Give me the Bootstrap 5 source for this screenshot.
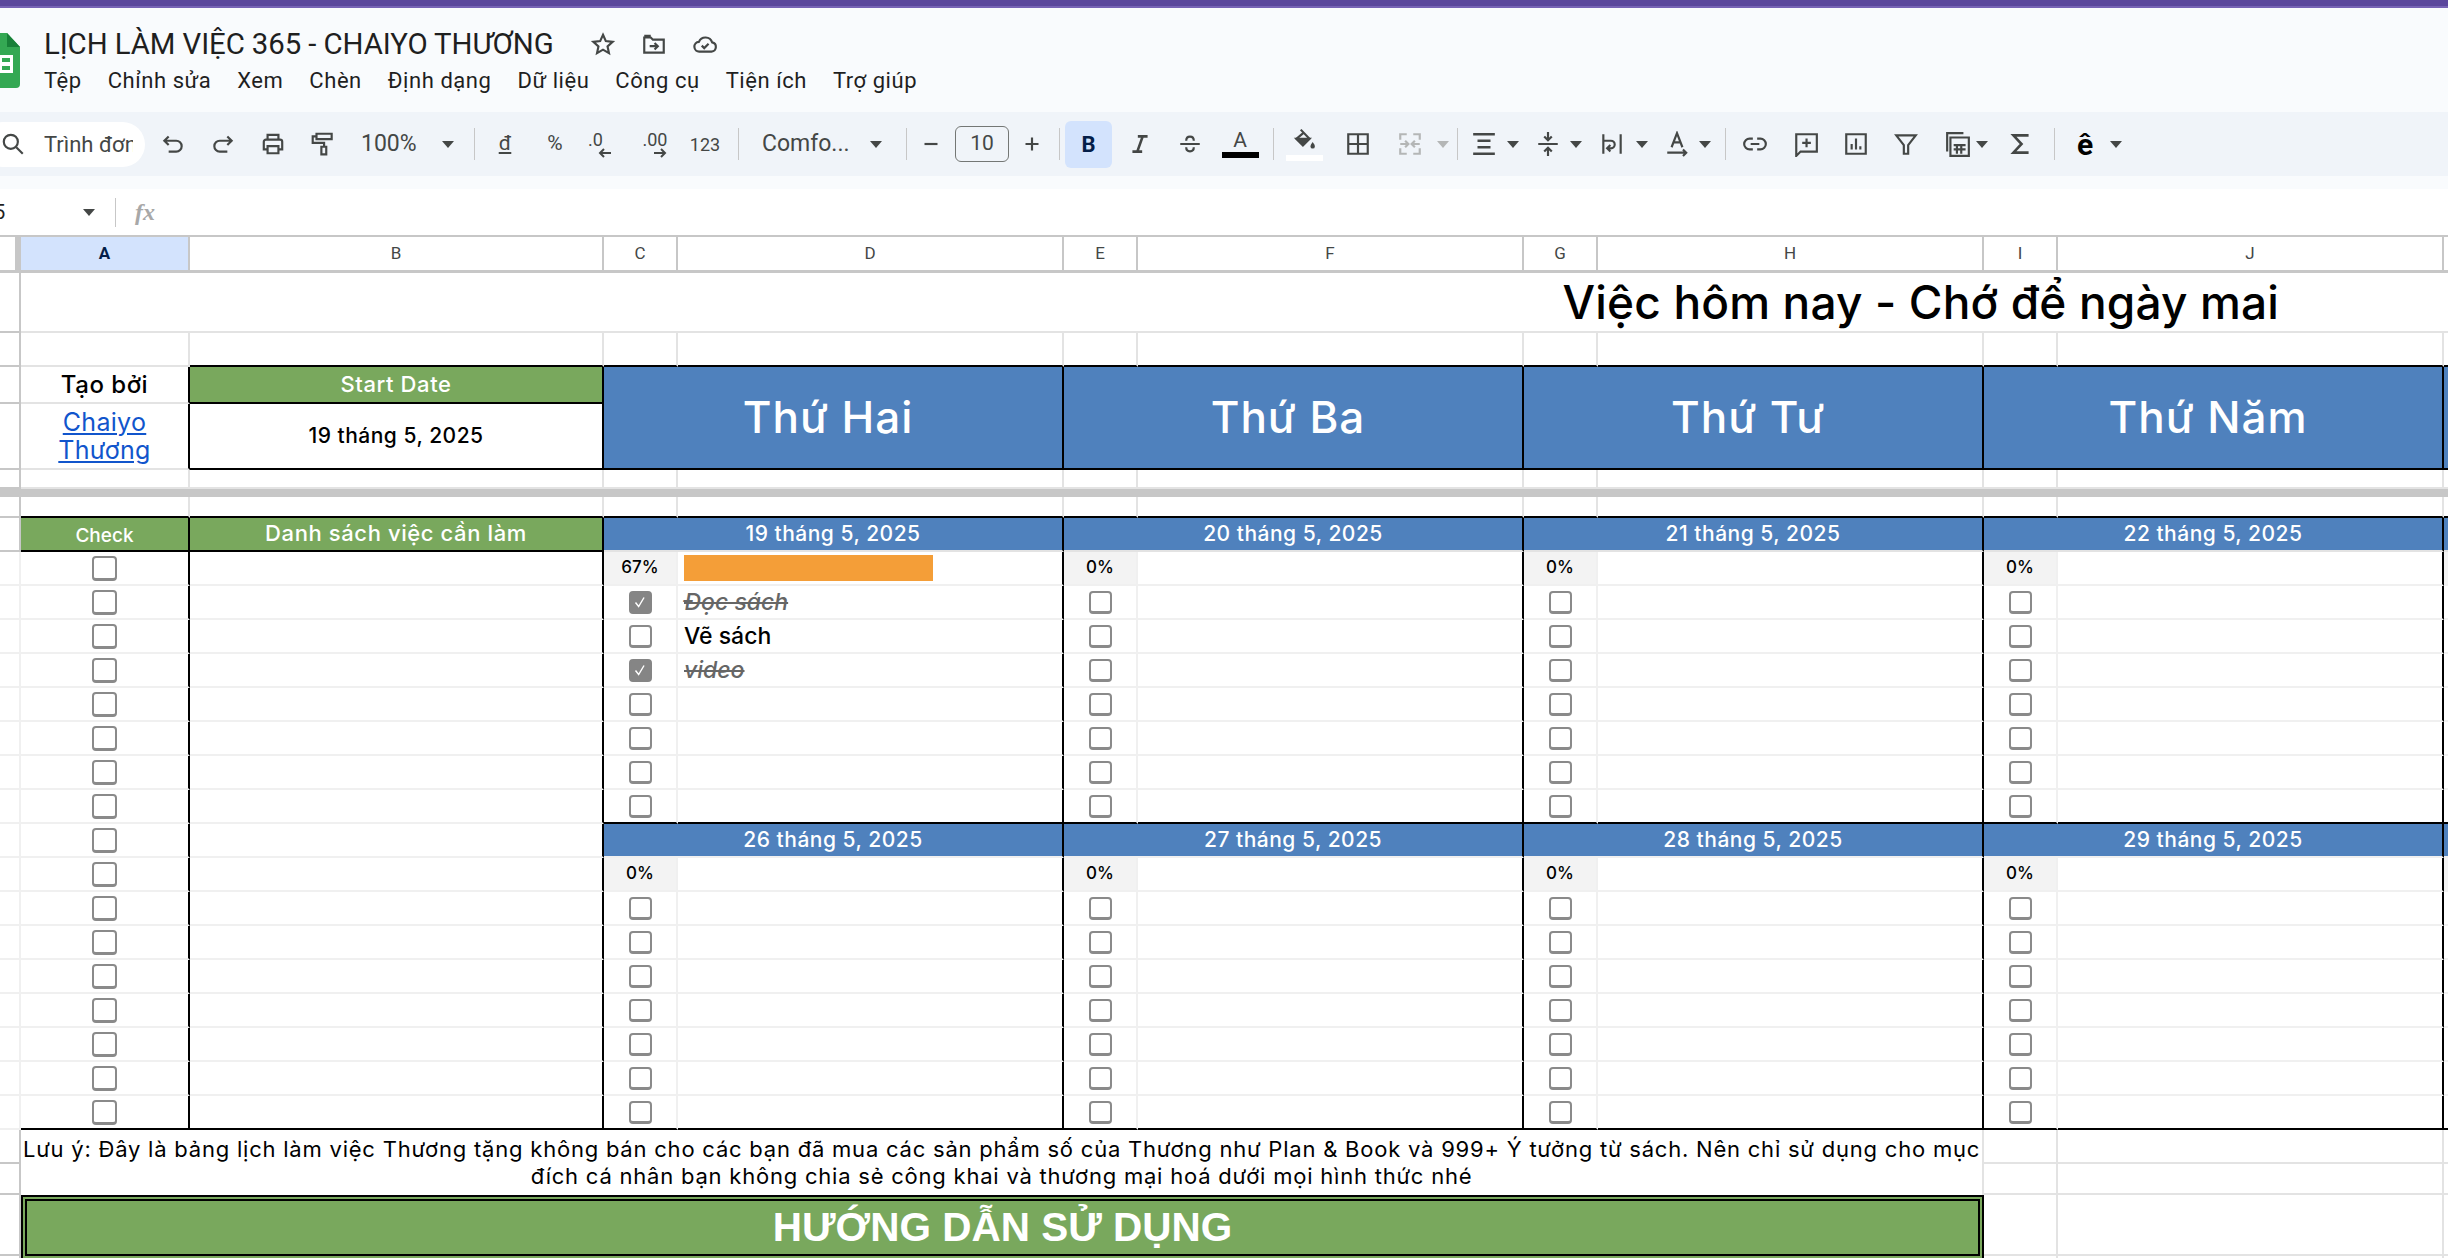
<!DOCTYPE html>
<html lang="vi">
<head>
<meta charset="utf-8">
<title>LỊCH LÀM VIỆC 365 - CHAIYO THƯƠNG</title>
<link href="https://cdn.jsdelivr.net/npm/bootstrap@5.3.0/dist/css/bootstrap.min.css" rel="stylesheet">
<style>
html,body{height:1258px;overflow:hidden;background:#fff}
body{font-family:Roboto,"Noto Sans",sans-serif;color:#1f1f1f}
.topbar{height:8px;background:#5b479c;border-bottom:2px solid #7763b5}
.hdr{height:104px;background:#f9fbfd}
.logo-box{width:44px;margin-top:25px}
.logo-box svg{margin-left:-20px;display:block}
.ttl-row{height:32px;margin-top:20px}
.ttl{width:546px;font-size:29.400px;line-height:32px;letter-spacing:-.1px;white-space:nowrap;color:#1f1f1f}
.ttl-ic{width:28px;margin-right:23px;color:#444746}
.menu-row{gap:26px;font-size:22px;line-height:34px;letter-spacing:.55px;margin-top:4px;color:#1f1f1f;white-space:nowrap}
.tbar{height:64px;background:#f0f4f9;color:#444746}
.pill{margin-left:-20px;width:165px;height:45px;background:#fff;border-radius:23px;padding-left:20px;font-size:22px;overflow:hidden;white-space:nowrap}
.pill svg{margin:0 18px 0 0;flex:none}
.pill-t{display:block;width:89px;overflow:hidden}
.ti{width:50px;height:47px;flex:none;font-size:18px}
.tn{width:36px}
.tc{width:16px;flex:none}
.tri{display:block;width:0;height:0;border-left:6.500px solid transparent;border-right:6.500px solid transparent;border-top:7px solid #444746}
.tc .tri{margin:auto}
.tri-off{border-top-color:#b4b6b6}
.sp{width:1px;height:32px;background:#c7c7c7;flex:none}
.tz{width:126px;padding:0 20px 0 13px;font-size:23px}
.tf{width:167px;padding:0 24px 0 23px;font-size:23px}
.tw48{width:48px}.tw46{width:46px}
.tsz{width:54px;height:36px;border:1px solid #747775;border-radius:6px;font-size:21px;flex:none}
.act{background:#d3e3fd;border-radius:6px;width:47px;color:#041e49;font-weight:700;font-size:22px}
.fs20{font-size:21px}
.g1{margin-left:1px}.g2{margin-left:2px}.g3{margin-left:3px}.g4{margin-left:4px}.g5{margin-left:5px}.g6{margin-left:6px}.g8{margin-left:8px}.g9{margin-left:9px}.g10{margin-left:10px}.g12{margin-left:12px}.gm{margin-left:-2px}
.ic{width:26px;height:26px;fill:none;stroke:currentColor;stroke-width:2;display:block}
.dim{color:#b4b6b6}
.stack{line-height:1;font-size:18px}
.stack svg{display:block;margin:-1px 0 0 10px}
.colorA{font-size:21px;line-height:20px;width:37px;text-align:center}
.bar-k{display:block;height:6px;background:#000;margin-top:2px}
.bar-w{display:block;height:6px;background:#fff;width:37px;margin-top:1px}
.ehat{color:#000;font-size:30px;font-weight:700}
.gapb{height:13px;background:#f9fbfd}
.fxb{height:46px;background:#fff}
.nbox{width:121px;font-size:20px;padding-right:20px;margin-left:-6px}
.fxsp{height:29px;width:1px;background:#c7c7c7}
.fxt{font-family:"Liberation Serif",serif;font-style:italic;font-weight:700;font-size:24px;color:#a8a8a8;margin-left:19px}
.sheet{table-layout:fixed;border-collapse:separate;border-spacing:0;width:2518px;font-family:Inter,"Noto Sans",sans-serif;color:#000}
.c0{width:21px}.ca{width:169px}.cb0{width:414px}.cs{width:74px}.cl{width:386px}
.sheet td,.sheet th{padding:0;border-right:2px solid #e3e3e3;border-bottom:2px solid #e3e3e3;text-align:center;vertical-align:middle;font-weight:400;line-height:1.15;overflow:hidden}
.sheet .hd th{height:38px;background:#fff;font-family:Roboto,sans-serif;font-size:17px;color:#444746;border-top:2px solid #c7c7c7;border-right-color:#c7c7c7;border-bottom:3px solid #c7c7c7}
.sheet .hd th.corner{border-right:6px solid #c7c7c7}
.sheet .hd th.sel{background:#d3e3fd;color:#041e49;font-weight:700}
.sheet td.rh{border-right:2px solid #c7c7c7;border-bottom-color:#c7c7c7}
.r1{height:60px}.r2{height:34px}.r3{height:37px}.r4{height:66px}.r5{height:19px}.rf{height:8px}.r6{height:21px}.r7{height:34px}.rn1{height:34px}.rn2{height:31px}.rb1{height:61px}.rb2{height:4px}
.sheet td.frz{background:#c7c7c7;border:0}
.sheet td.hl{font-size:46px;font-weight:500;letter-spacing:.15px;text-align:right;padding-right:237px;line-height:1;white-space:nowrap}
.sheet .dr{height:34px}
.sheet .dr td{border-color:#f0f0f0}
.sheet td.k-r{border-right-color:#000}
.sheet td.k-b{border-bottom-color:#000}
.sheet td.gr{background:#79a85d;color:#fff;font-weight:500;font-size:22px;letter-spacing:.6px}
.sheet td.bl{background:#4f81bd;color:#fff;font-weight:500;font-size:21px;letter-spacing:.5px}
.sheet td.day{font-size:44px;letter-spacing:1px;padding-right:10px}
.sheet td.chk{font-size:19px;letter-spacing:0;padding-top:3px}
.sheet td.by{font-size:24px;font-weight:500;letter-spacing:.5px}
.lnk{font-size:25px;line-height:28px;letter-spacing:.3px;color:#1155cc;display:block;padding:0 20px}
.sheet td.sd{font-size:21px;font-weight:500;letter-spacing:.5px}
.ck{display:block;margin:auto;width:25px;height:25px;border:2px solid #8a8a8a;border-bottom-width:3px;border-radius:3px;background-color:#fff}
.sm .ck{width:23px;height:23px}
.ck:checked{background-color:#858585;border-color:#858585;background-image:url("data:image/svg+xml,%3csvg xmlns='http://www.w3.org/2000/svg' viewBox='0 0 20 20'%3e%3cpath fill='none' stroke='%23fff' stroke-width='1.600' d='M5 10.500l3.500 4.500 6-10'/%3e%3c/svg%3e")}
.sheet td.pc{background:#f3f3f3;font-size:17px;font-weight:500}
.sheet td.pbox{padding:0 6px}
.pbox .progress{height:26px;background:transparent;border-radius:0}
.pbox .progress-bar{background:#f49e38}
.sheet td.tk{text-align:left;padding-left:6px;font-size:23px;font-weight:500;white-space:nowrap}
.sheet td.dn{color:#666;font-style:italic;text-decoration:line-through}
.sheet td.note{font-size:22px;letter-spacing:.78px;line-height:27px;font-weight:400;white-space:nowrap;border-bottom:0}
.sheet td.ban{background:#79a85d;color:#fff;border:6px double #000;font-family:"Liberation Sans",sans-serif;font-weight:700;font-size:40.500px;line-height:1}
</style>
</head>
<body>
<div class="topbar"></div>

<header class="hdr d-flex">
  <div class="logo-box">
    <svg width="40" height="55" viewBox="0 0 40 55"><path d="M4 0H27L40 14V51a4 4 0 0 1-4 4H4a4 4 0 0 1-4-4V4a4 4 0 0 1 4-4z" fill="#34a853"/><path d="M27 0L40 14H27z" fill="#188038"/><path d="M8 22H33V40H8z" fill="#fff"/><path d="M11 25h8v4h-8zM22 25h8v4h-8zM11 33h8v4h-8zM22 33h8v4h-8z" fill="#34a853"/></svg>
  </div>
  <div>
    <div class="ttl-row d-flex align-items-center">
      <div class="ttl">LỊCH LÀM VIỆC 365 - CHAIYO THƯƠNG</div>
      <div class="ttl-ic"><svg class="ic" viewBox="0 0 24 24"><path d="M12 3.500l2.600 5.800 6.300.7-4.700 4.200 1.300 6.200L12 17.200l-5.500 3.200 1.300-6.200L3.100 10l6.300-.7z"/></svg></div>
      <div class="ttl-ic"><svg class="ic" viewBox="0 0 24 24"><path d="M3 6V20H21V8H11L9 6H3zM3 4.500h6"/><path d="M8 14h7M12.500 11l3 3-3 3"/></svg></div>
      <div class="ttl-ic"><svg class="ic" viewBox="0 0 24 24"><path d="M7 19a4.500 4.500 0 0 1-.6-9A6.500 6.500 0 0 1 18.600 10.500 4.300 4.300 0 0 1 18 19z"/><path d="M9 13.500l2.300 2.300 4-4"/></svg></div>
    </div>
    <nav class="menu-row d-flex">
      <span>Tệp</span><span>Chỉnh sửa</span><span>Xem</span><span>Chèn</span><span>Định dạng</span><span>Dữ liệu</span><span>Công cụ</span><span>Tiện ích</span><span>Trợ giúp</span>
    </nav>
  </div>
</header>

<div class="tbar d-flex align-items-center">
  <div class="pill d-flex align-items-center"><svg class="ic" viewBox="0 0 24 24"><circle cx="10" cy="10" r="6.500"/><path d="M15 15l6 6"/></svg><span class="pill-t">Trình đơn</span></div>
  <div class="ti g3 d-flex align-items-center justify-content-center"><svg class="ic" viewBox="0 0 24 24"><path d="M8 5L4 9l4 4M4.500 9H15a5 5 0 0 1 0 10H8"/></svg></div>
  <div class="ti d-flex align-items-center justify-content-center"><svg class="ic" viewBox="0 0 24 24"><path d="M16 5l4 4-4 4M19.500 9H9a5 5 0 0 0 0 10h7"/></svg></div>
  <div class="ti d-flex align-items-center justify-content-center"><svg class="ic" viewBox="0 0 24 24"><path d="M7 8V3.500h10V8M7 17H3.500v-7a2 2 0 0 1 2-2h13a2 2 0 0 1 2 2v7H17M7 14h10v6.500H7z"/></svg></div>
  <div class="ti d-flex align-items-center justify-content-center"><svg class="ic" viewBox="0 0 24 24"><path d="M6 2.500h14v5H6zM6 5H2.500v6H13v3.500M10.500 14.500h4.500v7h-4.500z"/></svg></div>
  <div class="tz d-flex align-items-center justify-content-between"><span>100%</span><span class="tri"></span></div>
  <div class="sp"></div>
  <div class="ti fs20 g5 d-flex align-items-center justify-content-center"><span class="text-decoration-underline">đ</span></div>
  <div class="ti fs20 d-flex align-items-center justify-content-center">%</div>
  <div class="ti stack d-flex flex-column align-items-start justify-content-center ps-2"><span>.0</span><svg width="14" height="10" viewBox="0 0 14 10" fill="none" stroke="currentColor" stroke-width="2"><path d="M13 5H2M6 1L2 5l4 4"/></svg></div>
  <div class="ti stack d-flex flex-column align-items-center justify-content-center"><span>.00</span><svg width="14" height="10" viewBox="0 0 14 10" fill="none" stroke="currentColor" stroke-width="2"><path d="M1 5h11M8 1l4 4-4 4"/></svg></div>
  <div class="ti d-flex align-items-center justify-content-center">123</div>
  <div class="sp g8"></div>
  <div class="tf d-flex align-items-center justify-content-between"><span>Comfo...</span><span class="tri"></span></div>
  <div class="sp"></div>
  <div class="ti tw48 d-flex align-items-center justify-content-center"><svg class="ic" viewBox="0 0 24 24"><path d="M6 12h12"/></svg></div>
  <div class="tsz d-flex align-items-center justify-content-center">10</div>
  <div class="ti tw46 d-flex align-items-center justify-content-center"><svg class="ic" viewBox="0 0 24 24"><path d="M6 12h12M12 6v12"/></svg></div>
  <div class="sp g4"></div>
  <div class="ti act g5 d-flex align-items-center justify-content-center">B</div>
  <div class="ti g3 d-flex align-items-center justify-content-center"><svg class="ic" viewBox="0 0 24 24"><path d="M10 5h9M5 19h9M14.500 5l-5 14" stroke-width="2.400"/></svg></div>
  <div class="ti d-flex align-items-center justify-content-center"><svg class="ic" viewBox="0 0 24 24"><path d="M3 12h18M8.500 9c0-5 7-5 7 0M8.500 15c0 5 7 5 7 0"/></svg></div>
  <div class="ti d-flex flex-column align-items-center justify-content-center"><span class="colorA">A<span class="bar-k"></span></span></div>
  <div class="sp g8"></div>
  <div class="ti g5 d-flex flex-column align-items-center justify-content-center"><svg class="ic" viewBox="0 0 24 24"><path d="M9 1.500L17 10l-6 6-6-6 6.500-5.500"/><path d="M5 10h12l-6 6z" fill="currentColor"/><path d="M20 13c1.500 2 2 3 2 4a2 2 0 0 1-4 0c0-1 .5-2 2-4z" fill="currentColor" stroke="none"/></svg><span class="bar-w"></span></div>
  <div class="ti g4 d-flex align-items-center justify-content-center"><svg class="ic" viewBox="0 0 24 24"><path d="M3 3h18v18H3zM12 3v18M3 12h18"/></svg></div>
  <div class="ti g2 dim d-flex align-items-center justify-content-center"><svg class="ic" viewBox="0 0 24 24"><path d="M3 8V3h6M15 3h6v5M3 16v5h6M15 21h6v-5M3 12h7M7.500 9l3 3-3 3M21 12h-7M16.500 9l-3 3 3 3"/></svg></div>
  <div class="tc"><span class="tri tri-off"></span></div>
  <div class="sp g6"></div>
  <div class="ti tn g8 d-flex align-items-center justify-content-center"><svg class="ic" viewBox="0 0 24 24"><path d="M2 3h20M6 9h12M6 15h12M2 21h20" stroke-width="2.400"/></svg></div>
  <div class="tc g3"><span class="tri"></span></div>
  <div class="ti tn g9 d-flex align-items-center justify-content-center"><svg class="ic" viewBox="0 0 24 24"><path d="M3 12h18M12 1v7M8.500 5L12 8.500 15.500 5M12 23v-7M8.500 19L12 15.500l3.500 3.500"/></svg></div>
  <div class="tc g2"><span class="tri"></span></div>
  <div class="ti tn g10 d-flex align-items-center justify-content-center"><svg class="ic" viewBox="0 0 24 24"><path d="M4 3v18M20 3v18M4 9h7a3.500 3.500 0 0 1 0 7H8M10.500 13l-3 3 3 3"/></svg></div>
  <div class="tc g4"><span class="tri"></span></div>
  <div class="ti tn g9 d-flex align-items-center justify-content-center"><svg class="ic" viewBox="0 0 24 24"><path d="M7 15L12 2l5 13M8.500 10.500h7M3 20h17M17.500 17l3 3-3 3"/></svg></div>
  <div class="tc g2"><span class="tri"></span></div>
  <div class="sp g12"></div>
  <div class="ti g4 d-flex align-items-center justify-content-center"><svg class="ic" viewBox="0 0 24 24"><path d="M10 7H7a5 5 0 0 0 0 10h3M14 7h3a5 5 0 0 1 0 10h-3M8 12h8"/></svg></div>
  <div class="ti g1 d-flex align-items-center justify-content-center"><svg class="ic" viewBox="0 0 24 24"><path d="M3 3h19v16H7l-4 4zM12.500 7v8M8.500 11h8"/></svg></div>
  <div class="ti d-flex align-items-center justify-content-center"><svg class="ic" viewBox="0 0 24 24"><path d="M3 3h18v18H3zM8 17v-5M12 17V7M16 17v-3"/></svg></div>
  <div class="ti d-flex align-items-center justify-content-center"><svg class="ic" viewBox="0 0 24 24"><path d="M3 4h18l-7 9v8h-4v-8z"/></svg></div>
  <div class="ti tn g9 d-flex align-items-center justify-content-center"><svg class="ic" viewBox="0 0 24 24"><path d="M2 19V2h15M5 6h17v17H5zM8 13h11M8 17h11M11 13v8M15 13v8"/></svg></div>
  <div class="tc gm"><span class="tri"></span></div>
  <div class="ti g6 d-flex align-items-center justify-content-center"><svg class="ic" viewBox="0 0 24 24"><path d="M19 4H5l7.500 8L5 20h14" stroke-width="2.400"/></svg></div>
  <div class="sp g8"></div>
  <div class="ti tn g12 ehat d-flex align-items-center justify-content-center">ê</div>
  <div class="tc g5"><span class="tri"></span></div>
</div>
<div class="gapb"></div>

<div class="fxb d-flex align-items-center">
  <div class="nbox d-flex align-items-center justify-content-between"><span>5</span><span class="tri"></span></div>
  <div class="fxsp"></div>
  <span class="fxt">fx</span>
</div>

<table class="sheet">
  <colgroup><col class="c0"><col class="ca"><col class="cb0"><col class="cs"><col class="cl"><col class="cs"><col class="cl"><col class="cs"><col class="cl"><col class="cs"><col class="cl"><col class="cs"></colgroup>
  <thead><tr class="hd"><th class="corner"></th><th class="sel">A</th><th>B</th><th>C</th><th>D</th><th>E</th><th>F</th><th>G</th><th>H</th><th>I</th><th>J</th><th></th></tr></thead>
  <tbody>
    <tr class="r1"><td class="rh"></td><td class="hl" colspan="11">Việc hôm nay - Chớ để ngày mai</td></tr>
    <tr class="r2"><td class="rh"></td><td></td><td class="k-b"></td><td class="k-b"></td><td class="k-b"></td><td class="k-b"></td><td class="k-b"></td><td class="k-b"></td><td class="k-b"></td><td class="k-b"></td><td class="k-b"></td><td class="k-b"></td></tr>
    <tr class="r3"><td class="rh"></td><td class="by k-r">Tạo bởi</td><td class="gr k-b k-r">Start Date</td><td class="bl day k-r k-b" colspan="2" rowspan="2">Thứ Hai</td><td class="bl day k-r k-b" colspan="2" rowspan="2">Thứ Ba</td><td class="bl day k-r k-b" colspan="2" rowspan="2">Thứ Tư</td><td class="bl day k-r k-b" colspan="2" rowspan="2">Thứ Năm</td><td class="bl k-b" rowspan="2"></td></tr>
    <tr class="r4"><td class="rh"></td><td class="k-r"><a class="lnk" href="#">Chaiyo Thương</a></td><td class="sd k-b k-r">19 tháng 5, 2025</td></tr>
    <tr class="r5"><td class="rh"></td><td></td><td></td><td></td><td></td><td></td><td></td><td></td><td></td><td></td><td></td><td></td></tr>
    <tr class="rf"><td class="frz" colspan="12"></td></tr>
    <tr class="r6"><td class="rh"></td><td class="k-b"></td><td class="k-b"></td><td class="k-b"></td><td class="k-b"></td><td class="k-b"></td><td class="k-b"></td><td class="k-b"></td><td class="k-b"></td><td class="k-b"></td><td class="k-b"></td><td class="k-b"></td></tr>
    <tr class="r7"><td class="rh"></td><td class="gr chk k-r k-b">Check</td><td class="gr k-r k-b">Danh sách việc cần làm</td><td class="bl k-r" colspan="2">19 tháng 5, 2025</td><td class="bl k-r" colspan="2">20 tháng 5, 2025</td><td class="bl k-r" colspan="2">21 tháng 5, 2025</td><td class="bl k-r" colspan="2">22 tháng 5, 2025</td><td class="bl"></td></tr>

    <tr class="dr"><td class="rh"></td><td class="k-r"><input class="ck form-check-input" type="checkbox"></td><td class="k-r"></td><td class="pc">67%</td><td class="pbox k-r"><div class="progress"><div class="progress-bar" style="width:67%"></div></div></td><td class="pc">0%</td><td class="k-r"></td><td class="pc">0%</td><td class="k-r"></td><td class="pc">0%</td><td class="k-r"></td><td class="pc"></td></tr>
    <tr class="dr"><td class="rh"></td><td class="k-r"><input class="ck form-check-input" type="checkbox"></td><td class="k-r"></td><td class="sm"><input class="ck form-check-input" type="checkbox" checked></td><td class="tk dn k-r">Đọc sách</td><td class="sm"><input class="ck form-check-input" type="checkbox"></td><td class="k-r"></td><td class="sm"><input class="ck form-check-input" type="checkbox"></td><td class="k-r"></td><td class="sm"><input class="ck form-check-input" type="checkbox"></td><td class="k-r"></td><td></td></tr>
    <tr class="dr"><td class="rh"></td><td class="k-r"><input class="ck form-check-input" type="checkbox"></td><td class="k-r"></td><td class="sm"><input class="ck form-check-input" type="checkbox"></td><td class="tk k-r">Vẽ sách</td><td class="sm"><input class="ck form-check-input" type="checkbox"></td><td class="k-r"></td><td class="sm"><input class="ck form-check-input" type="checkbox"></td><td class="k-r"></td><td class="sm"><input class="ck form-check-input" type="checkbox"></td><td class="k-r"></td><td></td></tr>
    <tr class="dr"><td class="rh"></td><td class="k-r"><input class="ck form-check-input" type="checkbox"></td><td class="k-r"></td><td class="sm"><input class="ck form-check-input" type="checkbox" checked></td><td class="tk dn k-r">video</td><td class="sm"><input class="ck form-check-input" type="checkbox"></td><td class="k-r"></td><td class="sm"><input class="ck form-check-input" type="checkbox"></td><td class="k-r"></td><td class="sm"><input class="ck form-check-input" type="checkbox"></td><td class="k-r"></td><td></td></tr>
    <tr class="dr"><td class="rh"></td><td class="k-r"><input class="ck form-check-input" type="checkbox"></td><td class="k-r"></td><td class="sm"><input class="ck form-check-input" type="checkbox"></td><td class="k-r"></td><td class="sm"><input class="ck form-check-input" type="checkbox"></td><td class="k-r"></td><td class="sm"><input class="ck form-check-input" type="checkbox"></td><td class="k-r"></td><td class="sm"><input class="ck form-check-input" type="checkbox"></td><td class="k-r"></td><td></td></tr>
    <tr class="dr"><td class="rh"></td><td class="k-r"><input class="ck form-check-input" type="checkbox"></td><td class="k-r"></td><td class="sm"><input class="ck form-check-input" type="checkbox"></td><td class="k-r"></td><td class="sm"><input class="ck form-check-input" type="checkbox"></td><td class="k-r"></td><td class="sm"><input class="ck form-check-input" type="checkbox"></td><td class="k-r"></td><td class="sm"><input class="ck form-check-input" type="checkbox"></td><td class="k-r"></td><td></td></tr>
    <tr class="dr"><td class="rh"></td><td class="k-r"><input class="ck form-check-input" type="checkbox"></td><td class="k-r"></td><td class="sm"><input class="ck form-check-input" type="checkbox"></td><td class="k-r"></td><td class="sm"><input class="ck form-check-input" type="checkbox"></td><td class="k-r"></td><td class="sm"><input class="ck form-check-input" type="checkbox"></td><td class="k-r"></td><td class="sm"><input class="ck form-check-input" type="checkbox"></td><td class="k-r"></td><td></td></tr>
    <tr class="dr"><td class="rh"></td><td class="k-r"><input class="ck form-check-input" type="checkbox"></td><td class="k-r"></td><td class="sm k-b"><input class="ck form-check-input" type="checkbox"></td><td class="k-r k-b"></td><td class="sm k-b"><input class="ck form-check-input" type="checkbox"></td><td class="k-r k-b"></td><td class="sm k-b"><input class="ck form-check-input" type="checkbox"></td><td class="k-r k-b"></td><td class="sm k-b"><input class="ck form-check-input" type="checkbox"></td><td class="k-r k-b"></td><td class="k-b"></td></tr>

    <tr class="dr"><td class="rh"></td><td class="k-r"><input class="ck form-check-input" type="checkbox"></td><td class="k-r"></td><td class="bl k-r" colspan="2">26 tháng 5, 2025</td><td class="bl k-r" colspan="2">27 tháng 5, 2025</td><td class="bl k-r" colspan="2">28 tháng 5, 2025</td><td class="bl k-r" colspan="2">29 tháng 5, 2025</td><td class="bl"></td></tr>
    <tr class="dr"><td class="rh"></td><td class="k-r"><input class="ck form-check-input" type="checkbox"></td><td class="k-r"></td><td class="pc">0%</td><td class="k-r"></td><td class="pc">0%</td><td class="k-r"></td><td class="pc">0%</td><td class="k-r"></td><td class="pc">0%</td><td class="k-r"></td><td class="pc"></td></tr>
    <tr class="dr"><td class="rh"></td><td class="k-r"><input class="ck form-check-input" type="checkbox"></td><td class="k-r"></td><td class="sm"><input class="ck form-check-input" type="checkbox"></td><td class="k-r"></td><td class="sm"><input class="ck form-check-input" type="checkbox"></td><td class="k-r"></td><td class="sm"><input class="ck form-check-input" type="checkbox"></td><td class="k-r"></td><td class="sm"><input class="ck form-check-input" type="checkbox"></td><td class="k-r"></td><td></td></tr>
    <tr class="dr"><td class="rh"></td><td class="k-r"><input class="ck form-check-input" type="checkbox"></td><td class="k-r"></td><td class="sm"><input class="ck form-check-input" type="checkbox"></td><td class="k-r"></td><td class="sm"><input class="ck form-check-input" type="checkbox"></td><td class="k-r"></td><td class="sm"><input class="ck form-check-input" type="checkbox"></td><td class="k-r"></td><td class="sm"><input class="ck form-check-input" type="checkbox"></td><td class="k-r"></td><td></td></tr>
    <tr class="dr"><td class="rh"></td><td class="k-r"><input class="ck form-check-input" type="checkbox"></td><td class="k-r"></td><td class="sm"><input class="ck form-check-input" type="checkbox"></td><td class="k-r"></td><td class="sm"><input class="ck form-check-input" type="checkbox"></td><td class="k-r"></td><td class="sm"><input class="ck form-check-input" type="checkbox"></td><td class="k-r"></td><td class="sm"><input class="ck form-check-input" type="checkbox"></td><td class="k-r"></td><td></td></tr>
    <tr class="dr"><td class="rh"></td><td class="k-r"><input class="ck form-check-input" type="checkbox"></td><td class="k-r"></td><td class="sm"><input class="ck form-check-input" type="checkbox"></td><td class="k-r"></td><td class="sm"><input class="ck form-check-input" type="checkbox"></td><td class="k-r"></td><td class="sm"><input class="ck form-check-input" type="checkbox"></td><td class="k-r"></td><td class="sm"><input class="ck form-check-input" type="checkbox"></td><td class="k-r"></td><td></td></tr>
    <tr class="dr"><td class="rh"></td><td class="k-r"><input class="ck form-check-input" type="checkbox"></td><td class="k-r"></td><td class="sm"><input class="ck form-check-input" type="checkbox"></td><td class="k-r"></td><td class="sm"><input class="ck form-check-input" type="checkbox"></td><td class="k-r"></td><td class="sm"><input class="ck form-check-input" type="checkbox"></td><td class="k-r"></td><td class="sm"><input class="ck form-check-input" type="checkbox"></td><td class="k-r"></td><td></td></tr>
    <tr class="dr"><td class="rh"></td><td class="k-r"><input class="ck form-check-input" type="checkbox"></td><td class="k-r"></td><td class="sm"><input class="ck form-check-input" type="checkbox"></td><td class="k-r"></td><td class="sm"><input class="ck form-check-input" type="checkbox"></td><td class="k-r"></td><td class="sm"><input class="ck form-check-input" type="checkbox"></td><td class="k-r"></td><td class="sm"><input class="ck form-check-input" type="checkbox"></td><td class="k-r"></td><td></td></tr>
    <tr class="dr"><td class="rh"></td><td class="k-r k-b"><input class="ck form-check-input" type="checkbox"></td><td class="k-r k-b"></td><td class="sm k-b"><input class="ck form-check-input" type="checkbox"></td><td class="k-r k-b"></td><td class="sm k-b"><input class="ck form-check-input" type="checkbox"></td><td class="k-r k-b"></td><td class="sm k-b"><input class="ck form-check-input" type="checkbox"></td><td class="k-r k-b"></td><td class="sm k-b"><input class="ck form-check-input" type="checkbox"></td><td class="k-r k-b"></td><td class="k-b"></td></tr>

    <tr class="rn1"><td class="rh"></td><td class="note" colspan="8" rowspan="2">Lưu ý: Đây là bảng lịch làm việc Thương tặng không bán cho các bạn đã mua các sản phẩm số của Thương như Plan &amp; Book và 999+ Ý tưởng từ sách. Nên chỉ sử dụng cho mục<br>đích cá nhân bạn không chia sẻ công khai và thương mại hoá dưới mọi hình thức nhé</td><td></td><td></td><td></td></tr>
    <tr class="rn2"><td class="rh"></td><td></td><td></td><td></td></tr>
    <tr class="rb1"><td class="rh"></td><td class="ban" colspan="8" rowspan="2">HƯỚNG DẪN SỬ DỤNG</td><td></td><td></td><td></td></tr>
    <tr class="rb2"><td class="rh"></td><td></td><td></td><td></td></tr>
  </tbody>
</table>

<script src="https://cdn.jsdelivr.net/npm/bootstrap@5.3.0/dist/js/bootstrap.bundle.min.js"></script>
</body>
</html>
